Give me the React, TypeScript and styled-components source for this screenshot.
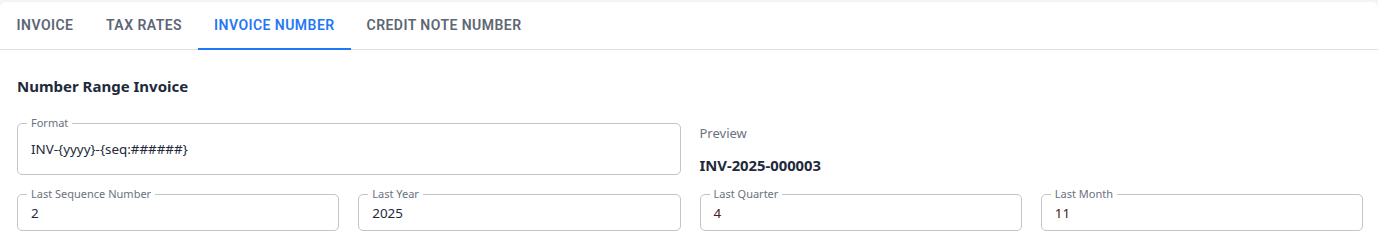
import React from "react";
import styled, { createGlobalStyle } from "styled-components";

const Global = createGlobalStyle`
  html, body { margin: 0; padding: 0; background: #f2f4f7; }
  body { font-family: "Noto Sans", "Open Sans", Arial, sans-serif; }
  * { box-sizing: border-box; }
`;

const Page = styled.div`
  padding-top: 2px;
  width: 1378px;
`;

const Card = styled.div`
  background: #fff;
  border-radius: 6px 6px 0 0;
  min-height: 243px;
`;

const TabBar = styled.div`
  display: flex;
  height: 48px;
  border-bottom: 1px solid #e0e0e0;
`;

const Tab = styled.div<{ $active?: boolean }>`
  min-width: 90px;
  height: 48px;
  padding: 0 16px;
  display: flex;
  align-items: center;
  justify-content: center;
  font-family: Roboto, Arial, sans-serif;
  font-size: 14px;
  font-weight: 600;
  letter-spacing: 0.45px;
  text-transform: uppercase;
  color: ${(p) => (p.$active ? "#1f78f6" : "#5d6675")};
  border-bottom: 2px solid ${(p) => (p.$active ? "#1f78f6" : "transparent")};
  margin-bottom: -1px;
`;

const Content = styled.div`
  padding: 26px 15px 0 17px;
`;

const Title = styled.h2`
  margin: 0 0 27px;
  font-size: 15px;
  line-height: 20px;
  font-weight: 700;
  color: #1e293b;
`;

const Grid = styled.div<{ $cols: number }>`
  display: grid;
  grid-template-columns: repeat(${(p) => p.$cols}, 1fr);
  column-gap: 19px;
  margin-bottom: 19px;
`;

const Field = styled.div<{ $h: number }>`
  position: relative;
  height: ${(p) => p.$h}px;
  border: 1px solid #c4c4c4;
  border-radius: 5px;
  display: flex;
  align-items: center;
  padding: 0 13px;
`;

const FieldLabel = styled.span`
  position: absolute;
  top: -8px;
  left: 9px;
  padding: 0 4px;
  background: #fff;
  font-size: 11px;
  line-height: 14px;
  color: #6b7280;
`;

const Value = styled.span<{ $color?: string }>`
  font-size: 13.4px;
  color: ${(p) => p.$color || "#1e293b"};
`;

const Preview = styled.div`
  display: flex;
  flex-direction: column;
  padding-top: 1px;
`;

const PreviewLabel = styled.div`
  font-size: 13px;
  line-height: 18px;
  color: #6b7280;
  margin-bottom: 13px;
`;

const PreviewValue = styled.div`
  font-size: 14.8px;
  line-height: 20px;
  font-weight: 700;
  color: #1e293b;
`;

const tabs = ["Invoice", "Tax Rates", "Invoice Number", "Credit Note Number"];

const small = [
  { label: "Last Sequence Number", value: "2" },
  { label: "Last Year", value: "2025" },
  { label: "Last Quarter", value: "4", color: "#3f2222" },
  { label: "Last Month", value: "11", color: "#3f2222" },
];

export default function App() {
  return (
    <Page>
      <Global />
      <Card>
        <TabBar>
          {tabs.map((t, i) => (
            <Tab key={t} $active={i === 2}>
              {t}
            </Tab>
          ))}
        </TabBar>
        <Content>
          <Title>Number Range Invoice</Title>
          <Grid $cols={2}>
            <Field $h={52}>
              <FieldLabel>Format</FieldLabel>
              <Value>INV-{"{yyyy}"}-{"{seq:######}"}</Value>
            </Field>
            <Preview>
              <PreviewLabel>Preview</PreviewLabel>
              <PreviewValue>INV-2025-000003</PreviewValue>
            </Preview>
          </Grid>
          <Grid $cols={4}>
            {small.map((f) => (
              <Field key={f.label} $h={37}>
                <FieldLabel>{f.label}</FieldLabel>
                <Value $color={f.color}>{f.value}</Value>
              </Field>
            ))}
          </Grid>
        </Content>
      </Card>
    </Page>
  );
}
